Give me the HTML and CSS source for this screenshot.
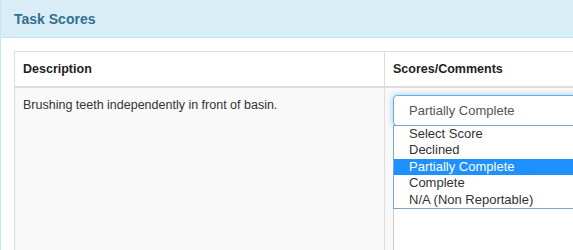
FILE: index.html
```html
<!DOCTYPE html>
<html lang="en">
<head>
    <meta charset="UTF-8">
    <meta name="viewport" content="width=device-width, initial-scale=1.0">
    <title>Task Scores</title>

    <link rel="stylesheet" href="styles.css">
</head>
<body>
<div class="panel">
    <div class="panel-heading">
        <h3>Task Scores</h3>
    </div>

    <div class="panel-body">
        <table class="scores">
            <thead>
                <tr>
                    <th class="col-desc">Description</th>
                    <th class="col-score">Scores/Comments</th>
                </tr>
            </thead>
            <tbody>
                <tr>
                    <td>Brushing teeth independently in front of basin.</td>
                    <td>
                        <div class="score-box">
                            <div class="select">Partially Complete</div>
                            <!-- open dropdown list of the select -->
                            <ul class="options">
                                <li>Select Score</li>
                                <li>Declined</li>
                                <li class="selected">Partially Complete</li>
                                <li>Complete</li>
                                <li>N/A (Non Reportable)</li>
                            </ul>
                            <textarea class="comments"></textarea>
                        </div>
                    </td>
                </tr>
            </tbody>
        </table>
    </div>
</div>
</body>
</html>
```

FILE: styles.css
```css
/* General styles for the body */
body {
    font-family: 'Liberation Sans', Arial, sans-serif;
    font-size: 13px;
    margin: 0;
    padding: 0;
    color: #333;
    background-color: #fff;
    overflow: hidden;
}

/* Panel */
.panel {
    width: 760px;
    border-left: 1px solid #bce8f1;
    min-height: 250px;
}

.panel-heading {
    background-color: #d9edf7;
    border-bottom: 1px solid #bce8f1;
    height: 38px;
    box-sizing: border-box;
    padding: 0 13px;
    display: flex;
    align-items: center;
}

.panel-heading h3 {
    margin: 0;
    font-size: 14px;
    font-weight: bold;
    color: #31708f;
}

.panel-body {
    padding: 13px 13px;
}

/* Table */
.scores {
    width: 100%;
    border-collapse: collapse;
    border: 1px solid #ddd;
    font-size: 12.5px;
}

.scores th, .scores td {
    border: 1px solid #ddd;
    padding: 8px;
    line-height: 18px;
    text-align: left;
    vertical-align: top;
}

.scores th {
    font-weight: bold;
    color: #222;
    border-bottom-width: 2px;
    background-color: #fff;
}

.scores td {
    background-color: #f9f9f9;
    height: 200px;
}

.col-desc {
    width: 353px;
}

/* Score select and comments */
.score-box {
    position: relative;
}

.select {
    height: 31px;
    box-sizing: border-box;
    border: 1px solid #66afe9;
    border-radius: 4px;
    box-shadow: 0 0 6px rgba(102, 175, 233, 0.6);
    background-color: #fff;
    color: #555;
    font-size: 13px;
    padding: 7px 15px;
    line-height: 16px;
    margin-top: -1px;
}

.options {
    position: absolute;
    top: 30px;
    left: 0;
    right: 0;
    margin: 0;
    padding: 0;
    list-style: none;
    background-color: #fff;
    border: 1px solid #7aa7d9;
    font-size: 13px;
    z-index: 10;
}

.options li {
    padding: 0 15px;
    height: 16.4px;
    line-height: 16px;
    color: #333;
}

.options li.selected {
    background-color: #1e90ff;
    color: #fff;
}

.comments {
    display: block;
    width: 100%;
    height: 160px;
    margin-top: 6px;
    box-sizing: border-box;
    border: 1px solid #ccc;
    border-radius: 4px;
    resize: none;
}
```
